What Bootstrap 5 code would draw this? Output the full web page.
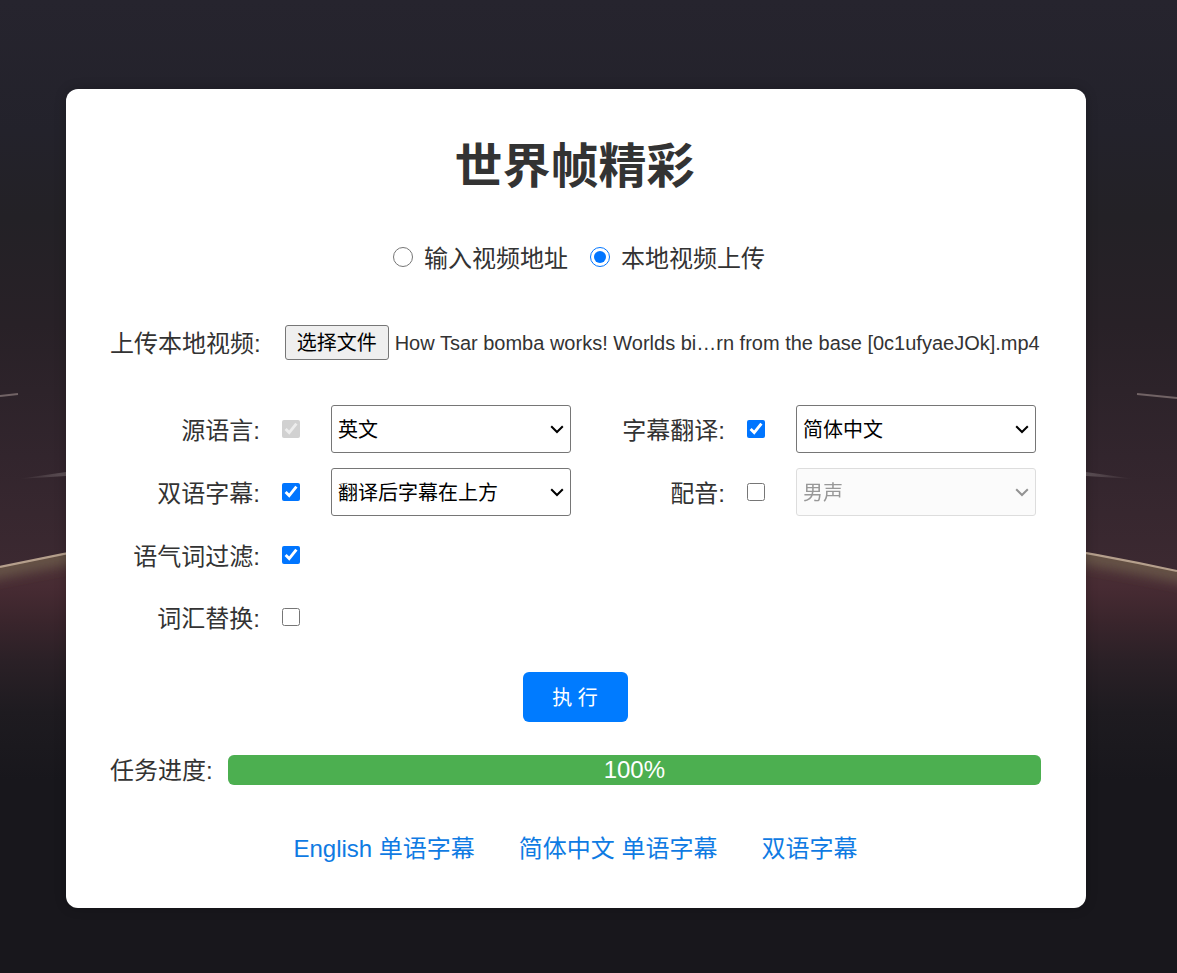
<!DOCTYPE html>
<html lang="zh-CN">
<head>
<meta charset="utf-8">
<meta name="viewport" content="width=device-width, initial-scale=1">
<title>世界帧精彩</title>
<link href="https://cdn.jsdelivr.net/npm/bootstrap@5.3.0/dist/css/bootstrap.min.css" rel="stylesheet">
<style>
  body { font-family: "Liberation Sans", "Noto Sans CJK SC", sans-serif; font-size: 24px; line-height: 36px; color: #333; background: #18171c; height: 973px; }
  .backdrop { z-index: -1; }
  .panel { width: 1020px; height: 819px; margin: 89px 0 0 66px; padding: 38px 45px 0 44px; border-radius: 12px; box-shadow: 0 0 12px rgba(0,0,0,.22); }
  .panel-title { font-size: 48px; line-height: 80px; height: 80px; font-weight: 700; padding-right: 2px; }
  .mode-row { margin-top: 31px; height: 40px; padding-left: 7px; }
  .mode-row label { padding-top: 2px; }
  input[type=checkbox], input[type=radio] { width: 18px; height: 18px; margin: 0; flex: none; }
  input[type=radio] { width: 20px; height: 20px; margin: 0 11px 3px 0; }
  .mode-row label + input[type=radio] { margin-left: 22px; }
  .upload-row { margin-top: 47px; height: 35px; }
  .upload-row > span:first-child, .task-row > span { padding-top: 2px; }
  .pick-btn { width: 104px; height: 35px; margin-left: 24px; font-size: 20px; line-height: 30px; padding: 1px 0 0; color: #000; background: #efefef; border: 1px solid #767676; border-radius: 3px; }
  .file-name { font-size: 20px; margin-left: 6px; }
  .options { margin: 45px 0 0 1px; row-gap: 15px; }
  .option { height: 48px; }
  .option:last-child { height: 46px; }
  .option-label { width: 149px; margin-right: 22px; padding-top: 4px; }
  .option select { appearance: none; width: 240px; height: 48px; margin-left: 31px; padding: 1px 6px 0; font-size: 20px; color: #000; opacity: 1;
    border: 1px solid #767676; border-radius: 3px;
    background: #fff url("data:image/svg+xml,%3Csvg xmlns='http://www.w3.org/2000/svg' width='14' height='9'%3E%3Cpath d='M1.2 1.2 7 7l5.800-5.800' fill='none' stroke='black' stroke-width='2'/%3E%3C/svg%3E") no-repeat right 6px center; }
  .option select:disabled { opacity: .7; color: #6d6d6d; border-color: #d0d0d0; background-color: #fafafa;
    background-image: url("data:image/svg+xml,%3Csvg xmlns='http://www.w3.org/2000/svg' width='14' height='9'%3E%3Cpath d='M1.2 1.2 7 7l5.800-5.800' fill='none' stroke='%23666' stroke-width='2'/%3E%3C/svg%3E"); }
  .run-btn { margin: 32px 1px 0 0; width: 105px; height: 50px; padding: 2px 0 0; font-size: 20px; background: #007bff; border: 0; border-radius: 6px; }
  .task-row { margin-top: 33px; height: 30px; }
  .task-row .progress { height: 30px; border-radius: 6px; font-size: 24px; margin-left: 15px; }
  .task-row .progress-bar { background: #4caf50; }
  .links { margin-top: 46px; gap: 44px; }
  .links a { color: #0f7be3; }
</style>
</head>
<body class="position-relative overflow-hidden">
<svg class="backdrop position-absolute top-0 start-0" width="1177" height="973" viewBox="0 0 1177 973" aria-hidden="true">
  <defs>
    <linearGradient id="sky" gradientUnits="userSpaceOnUse" x1="0" y1="0" x2="0" y2="570">
      <stop offset="0" stop-color="#26242e"/><stop offset=".23" stop-color="#23222b"/><stop offset=".38" stop-color="#232126"/>
      <stop offset=".57" stop-color="#282127"/><stop offset=".8" stop-color="#32252d"/><stop offset="1" stop-color="#3c2931"/>
    </linearGradient>
    <linearGradient id="ground" gradientUnits="userSpaceOnUse" x1="0" y1="553" x2="0" y2="780">
      <stop offset="0" stop-color="#4c3236"/><stop offset=".15" stop-color="#472b33"/><stop offset=".3" stop-color="#3a252c"/>
      <stop offset=".48" stop-color="#2a2026"/><stop offset=".7" stop-color="#1e1b20"/><stop offset="1" stop-color="#18171c"/>
    </linearGradient>
    <linearGradient id="streakL"><stop offset="0" stop-color="#706468" stop-opacity="0"/><stop offset="1" stop-color="#706468" stop-opacity=".7"/></linearGradient>
    <linearGradient id="streakR"><stop offset="0" stop-color="#706468" stop-opacity=".7"/><stop offset="1" stop-color="#706468" stop-opacity="0"/></linearGradient>
    <filter id="soft" x="-5%" y="-50%" width="110%" height="200%"><feGaussianBlur stdDeviation="6"/></filter>
    <clipPath id="below"><path d="M0 567Q576 443 1177 571V973H0Z"/></clipPath>
  </defs>
  <rect width="1177" height="600" fill="url(#sky)"/>
  <path d="M0 567Q576 443 1177 571V973H0Z" fill="url(#ground)"/>
  <g clip-path="url(#below)"><path d="M-20 573Q576 445 1197 577" fill="none" stroke="#6b5a4a" stroke-width="18" stroke-opacity=".85" filter="url(#soft)"/></g>
  <path d="M0 567Q576 443 1177 571" fill="none" stroke="#b59f8c" stroke-width="2.200"/>
  <path d="M0 396l18-2M1137 394l40 4" stroke="#716365" stroke-width="2"/>
  <path d="M18 479l48-7v4z" fill="url(#streakL)"/>
  <path d="M1086 472l48 7-48-3z" fill="url(#streakR)"/>
</svg>

<main class="panel bg-white d-flex flex-column">
  <h1 class="panel-title text-center m-0">世界帧精彩</h1>

  <div class="mode-row d-flex justify-content-center align-items-center">
    <input type="radio" name="mode" id="modeUrl"><label for="modeUrl">输入视频地址</label>
    <input type="radio" name="mode" id="modeFile" checked><label for="modeFile">本地视频上传</label>
  </div>

  <div class="upload-row d-flex align-items-center text-nowrap">
    <span>上传本地视频:</span>
    <button type="button" class="btn pick-btn">选择文件</button>
    <span class="file-name">How Tsar bomba works! Worlds bi…rn from the base [0c1ufyaeJOk].mp4</span>
  </div>

  <div class="options row gx-0">
    <div class="col-6 option d-flex align-items-center">
      <label class="option-label text-end">源语言:</label><input type="checkbox" checked disabled>
      <select><option>英文</option></select>
    </div>
    <div class="col-6 option d-flex align-items-center">
      <label class="option-label text-end">字幕翻译:</label><input type="checkbox" checked>
      <select><option>简体中文</option></select>
    </div>
    <div class="col-6 option d-flex align-items-center">
      <label class="option-label text-end">双语字幕:</label><input type="checkbox" checked>
      <select><option>翻译后字幕在上方</option></select>
    </div>
    <div class="col-6 option d-flex align-items-center">
      <label class="option-label text-end">配音:</label><input type="checkbox">
      <select disabled><option>男声</option></select>
    </div>
    <div class="col-12 option d-flex align-items-center">
      <label class="option-label text-end">语气词过滤:</label><input type="checkbox" checked>
    </div>
    <div class="col-12 option d-flex align-items-center">
      <label class="option-label text-end">词汇替换:</label><input type="checkbox">
    </div>
  </div>

  <button type="button" class="btn btn-primary run-btn align-self-center">执 行</button>

  <div class="task-row d-flex align-items-center">
    <span class="text-nowrap">任务进度:</span>
    <div class="progress flex-grow-1"><div class="progress-bar w-100">100%</div></div>
  </div>

  <div class="links d-flex justify-content-center">
    <a href="#" class="text-decoration-none">English 单语字幕</a>
    <a href="#" class="text-decoration-none">简体中文 单语字幕</a>
    <a href="#" class="text-decoration-none">双语字幕</a>
  </div>
</main>
<script src="https://cdn.jsdelivr.net/npm/bootstrap@5.3.0/dist/js/bootstrap.bundle.min.js"></script>
</body>
</html>
